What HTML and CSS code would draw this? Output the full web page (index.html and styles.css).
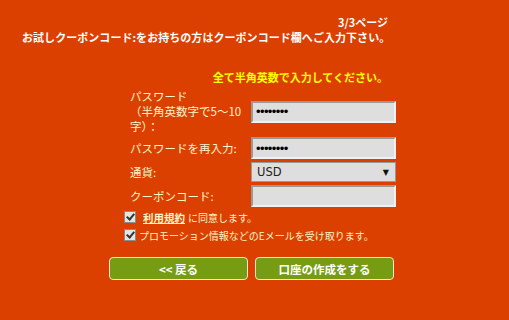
FILE: index.html
```html
<!DOCTYPE html>
<html lang="ja">
<head>
  <meta charset="UTF-8">
  <title>口座の作成</title>
  <link rel="stylesheet" href="styles.css">
</head>
<body>
  <div class="page">
    <div class="step">3/3ページ</div>
    <div class="intro">お試しクーポンコード:をお持ちの方はクーポンコード欄へご入力下さい。</div>
    <div class="notice">全て半角英数で入力してください。</div>

    <form class="form">
      <div class="fields">
        <label class="label">パスワード<br>（半角英数字で5～10<br>字）：</label>
        <input class="field" type="password" value="12345678">

        <label class="label">パスワードを再入力:</label>
        <input class="field" type="password" value="12345678">

        <label class="label">通貨:</label>
        <div class="select">
          <span>USD</span>
          <span class="arrow">▼</span>
        </div>

        <label class="label">クーポンコード:</label>
        <input class="field" type="text">
      </div>

      <div class="checks">
        <label class="check"><span class="box"></span><a class="terms" href="#">利用規約</a>に同意します。</label>
        <label class="check"><span class="box"></span>プロモーション情報などのEメールを受け取ります。</label>
      </div>

      <div class="buttons">
        <button class="btn" type="button">&lt;&lt; 戻る</button>
        <button class="btn" type="button">口座の作成をする</button>
      </div>
    </form>
  </div>
</body>
</html>
```

FILE: styles.css
```css
body {
  margin: 0;
  background-color: #dc4000;
  font-family: "Noto Sans CJK JP", "Noto Sans", sans-serif;
  font-size: 11px;
  color: #fff;
}

.page {
  width: 366px;
  margin-left: 22px;
  padding-top: 15px;
}

.step,
.intro,
.notice {
  font-weight: bold;
  line-height: 14px;
  white-space: nowrap;
}

.step {
  text-align: right;
}

.intro {
  margin-top: 1px;
  letter-spacing: 0.05px;
}

.notice {
  margin-top: 26px;
  text-align: right;
  color: #ffff00;
}

.form {
  margin-top: 5px;
}

.fields {
  display: grid;
  grid-template-columns: 121px 145px;
  row-gap: 3px;
  align-items: center;
  margin-left: 108px;
}

.label {
  color: #fff3c8;
  font-size: 11.5px;
  line-height: 15px;
  white-space: nowrap;
}

.field {
  box-sizing: border-box;
  width: 145px;
  height: 22px;
  margin: 0;
  padding: 0 3px;
  border: 2px solid #999;
  border-right-color: #f0f0f0;
  border-bottom-color: #f0f0f0;
  background-color: #dedede;
  font-family: "Liberation Sans", sans-serif;
  font-size: 13px;
  letter-spacing: -0.6px;
  color: #000;
  outline: none;
}

.select {
  box-sizing: border-box;
  height: 20px;
  display: flex;
  align-items: center;
  justify-content: space-between;
  padding: 0 6px 0 5px;
  border: 1px solid #999;
  background-color: #dedede;
  color: #222;
  font-family: "DejaVu Sans", sans-serif;
  font-size: 11.5px;
}

.arrow {
  font-size: 8px;
  color: #111;
}

.checks {
  margin-top: 4px;
  margin-left: 102px;
  display: flex;
  flex-direction: column;
  gap: 6px;
}

.check {
  display: flex;
  align-items: center;
  gap: 3px;
  height: 12px;
  color: #fff3c8;
  font-size: 10px;
  white-space: nowrap;
}

.box {
  position: relative;
  flex: none;
  box-sizing: border-box;
  width: 12px;
  height: 12px;
  border: 1px solid #8a8a8a;
  background-color: #e4e4e4;
}

.box:after {
  content: "";
  position: absolute;
  left: 3px;
  top: 0;
  width: 3px;
  height: 6px;
  border-right: 2px solid #333;
  border-bottom: 2px solid #333;
  transform: rotate(40deg);
}

.terms {
  margin-left: 4px;
  color: #fff3c8;
  font-weight: bold;
  font-size: 10.5px;
  text-decoration: underline;
}

.buttons {
  display: flex;
  gap: 7px;
  margin-top: 16px;
  margin-left: 87px;
}

.btn {
  flex: none;
  width: 139px;
  height: 23px;
  border: 1px solid #eee6d0;
  border-radius: 4px;
  background-color: #769c13;
  color: #fff;
  font-family: "Noto Sans CJK JP", sans-serif;
  font-size: 11.5px;
  font-weight: bold;
  padding: 0;
}
```
